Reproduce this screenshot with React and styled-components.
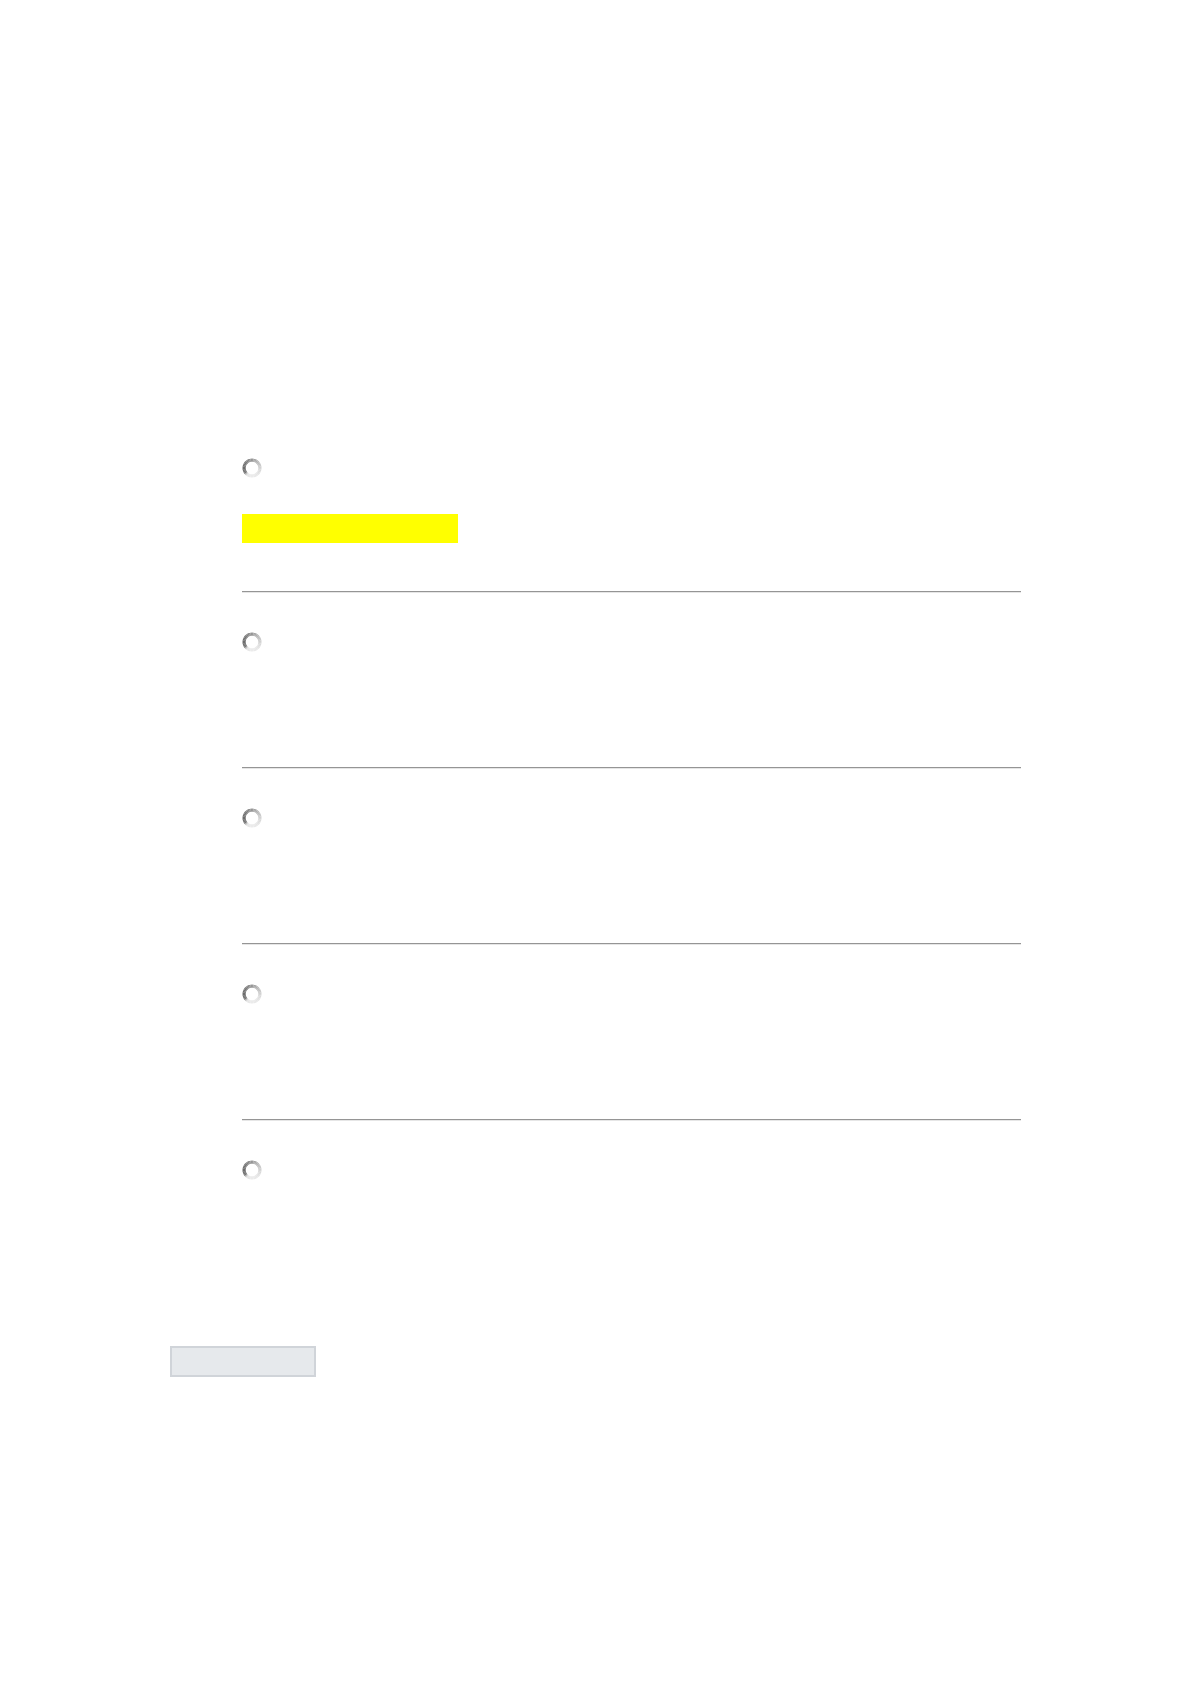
import React from "react";
import styled, { createGlobalStyle } from "styled-components";

const GlobalStyle = createGlobalStyle`
  html, body {
    margin: 0;
    padding: 0;
    background: #ffffff;
    font-family: "Liberation Sans", Arial, sans-serif;
  }
`;

const Page = styled.div`
  min-height: 1685px;
  padding: 458px 0 0 170px;
  box-sizing: border-box;
`;

const QuestionList = styled.div`
  margin-left: 72px;
  width: 779px;
  display: flex;
  flex-direction: column;
`;

const Question = styled.div`
  display: flex;
  flex-direction: column;
  align-items: flex-start;
  padding-top: ${(p) => (p.$first ? "0" : "39px")};
`;

const Answer = styled.div`
  height: 115px;
`;

const Highlight = styled.div`
  width: 216px;
  height: 29px;
  margin: 36px 0 48px;
  background: #ffff00;
`;

const Divider = styled.div`
  height: 0;
  border-top: 1px solid #959595;
  border-bottom: 1px solid #e6e6e6;
`;

const Footer = styled.div`
  margin-top: 51px;
`;

const GrayButton = styled.button`
  width: 146px;
  height: 31px;
  padding: 0;
  border: 2px solid #d0d4d9;
  background: #e6e9ec;
  cursor: pointer;
`;

const SpinnerBox = styled.svg`
  display: block;
  width: 20px;
  height: 20px;
`;

// grey level around the ring, angle clockwise from the top
const stops = [
  [0, 0x98],
  [45, 0xb6],
  [90, 0xd4],
  [135, 0xe4],
  [180, 0xec],
  [220, 0xe2],
  [235, 0x78],
  [270, 0x6a],
  [305, 0x72],
  [330, 0x84],
  [360, 0x98],
];

const greyAt = (a) => {
  for (let i = 0; i < stops.length - 1; i++) {
    const [a1, v1] = stops[i];
    const [a2, v2] = stops[i + 1];
    if (a >= a1 && a <= a2) return Math.round(v1 + ((v2 - v1) * (a - a1)) / (a2 - a1));
  }
  return 0x98;
};

// small loading ring, darkest on the left
const Spinner = () => {
  const segs = [];
  const n = 36;
  const r = 7.9;
  const p = (a) => {
    const rad = ((a - 90) * Math.PI) / 180;
    return [10 + r * Math.cos(rad), 10 + r * Math.sin(rad)];
  };
  for (let i = 0; i < n; i++) {
    const a1 = (i / n) * 360;
    const a2 = ((i + 1) / n) * 360;
    const v = greyAt((a1 + a2) / 2);
    const [x1, y1] = p(a1);
    const [x2, y2] = p(a2 + 0.6);
    segs.push(
      <path
        key={i}
        d={`M ${x1} ${y1} A ${r} ${r} 0 0 1 ${x2} ${y2}`}
        stroke={`rgb(${v},${v},${v})`}
        strokeWidth="3.2"
        fill="none"
      />
    );
  }
  return (
    <SpinnerBox viewBox="0 0 20 20">
      <circle cx="10" cy="10" r="6.4" fill="#ffffff" />
      {segs}
    </SpinnerBox>
  );
};

const App = () => {
  const rest = [1, 2, 3, 4];
  return (
    <>
      <GlobalStyle />
      <Page>
        <QuestionList>
          <Question $first>
            <Spinner />
            <Highlight />
          </Question>
          {rest.map((q) => (
            <React.Fragment key={q}>
              <Divider />
              <Question>
                <Spinner />
                <Answer />
              </Question>
            </React.Fragment>
          ))}
        </QuestionList>
        <Footer>
          <GrayButton type="button" aria-label="submit" />
        </Footer>
      </Page>
    </>
  );
};

export default App;
